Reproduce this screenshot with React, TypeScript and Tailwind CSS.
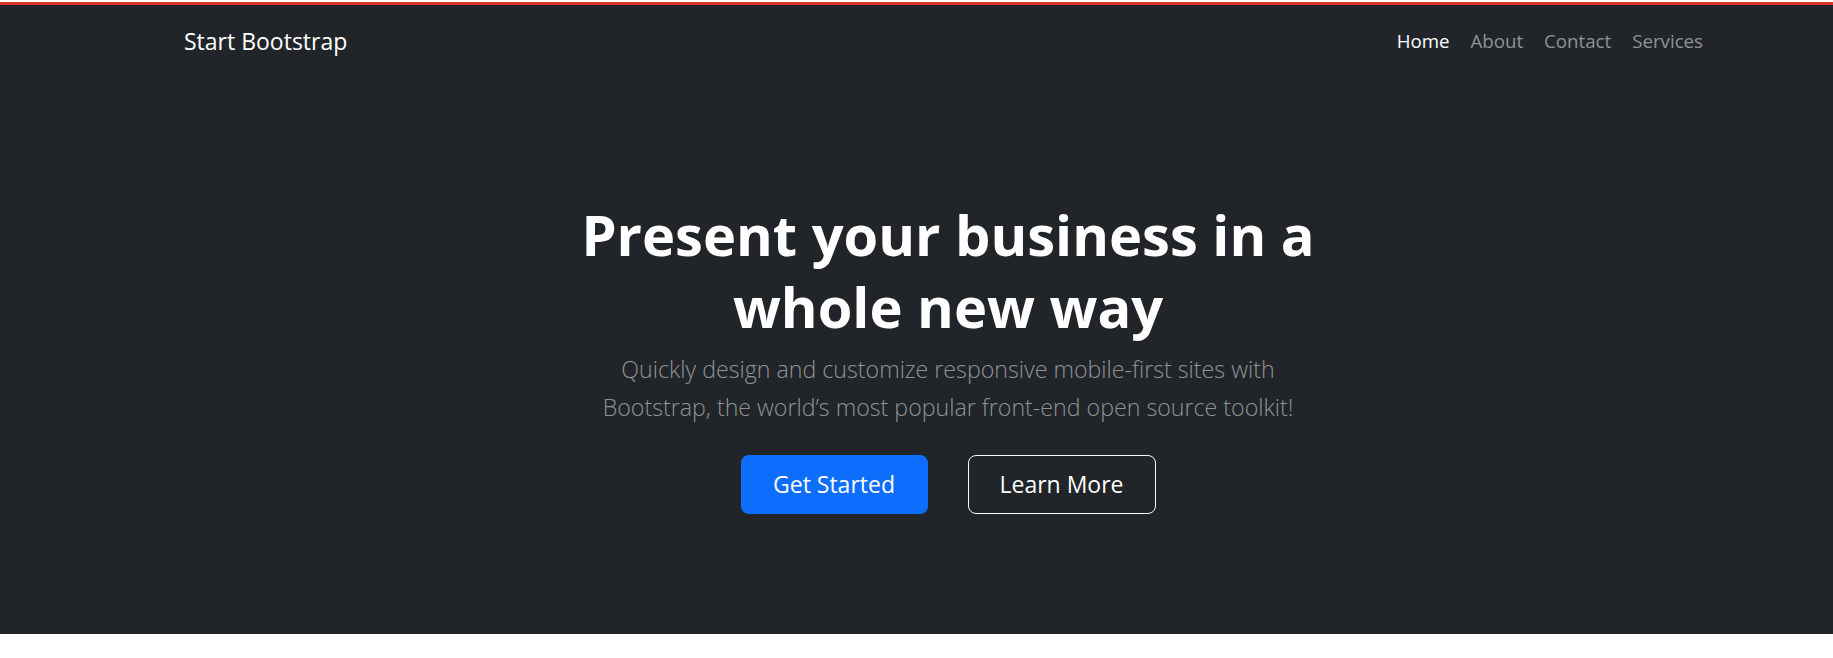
import React from "react";

export default function App() {
  return (
    <div className="w-full min-h-[658px] bg-white font-['Open_Sans','Noto_Sans',sans-serif]">
      <div className="h-[2px] bg-white" />
      <div className="h-[3px] bg-[#d9352a]" />
      <div className="h-[629px] bg-[#212529] flex flex-col">
        <nav className="flex items-start justify-between pt-[20px] pl-[184px] pr-[130px]">
          <a className="text-[23px] leading-[32px] text-white">Start Bootstrap</a>
          <ul className="flex items-start gap-[21px] text-[18.7px] leading-[32px]">
            <li className="text-white">Home</li>
            <li className="text-[#8f9296]">About</li>
            <li className="text-[#8f9296]">Contact</li>
            <li className="text-[#8f9296]">Services</li>
          </ul>
        </nav>
        <section className="flex flex-col items-center pl-[184px] pr-[121px] pt-[141px]">
          <h1 className="text-center text-[56px] leading-[72px] font-bold text-white">
            Present your business in a
            <br />
            whole new way
          </h1>
          <p className="mt-[8px] text-center text-[23.2px] leading-[38px] font-light text-[#909396] whitespace-nowrap">
            Quickly design and customize responsive mobile-first sites with
            <br />
            Bootstrap, the world’s most popular front-end open source toolkit!
          </p>
          <div className="mt-[29px] flex gap-[40px]">
            <button className="w-[187px] h-[59px] rounded-[8px] bg-[#0d6efd] text-white text-[23px]">
              Get Started
            </button>
            <button className="w-[188px] h-[59px] rounded-[8px] border border-[#f8f9fa] text-white text-[23px]">
              Learn More
            </button>
          </div>
        </section>
      </div>
    </div>
  );
}
